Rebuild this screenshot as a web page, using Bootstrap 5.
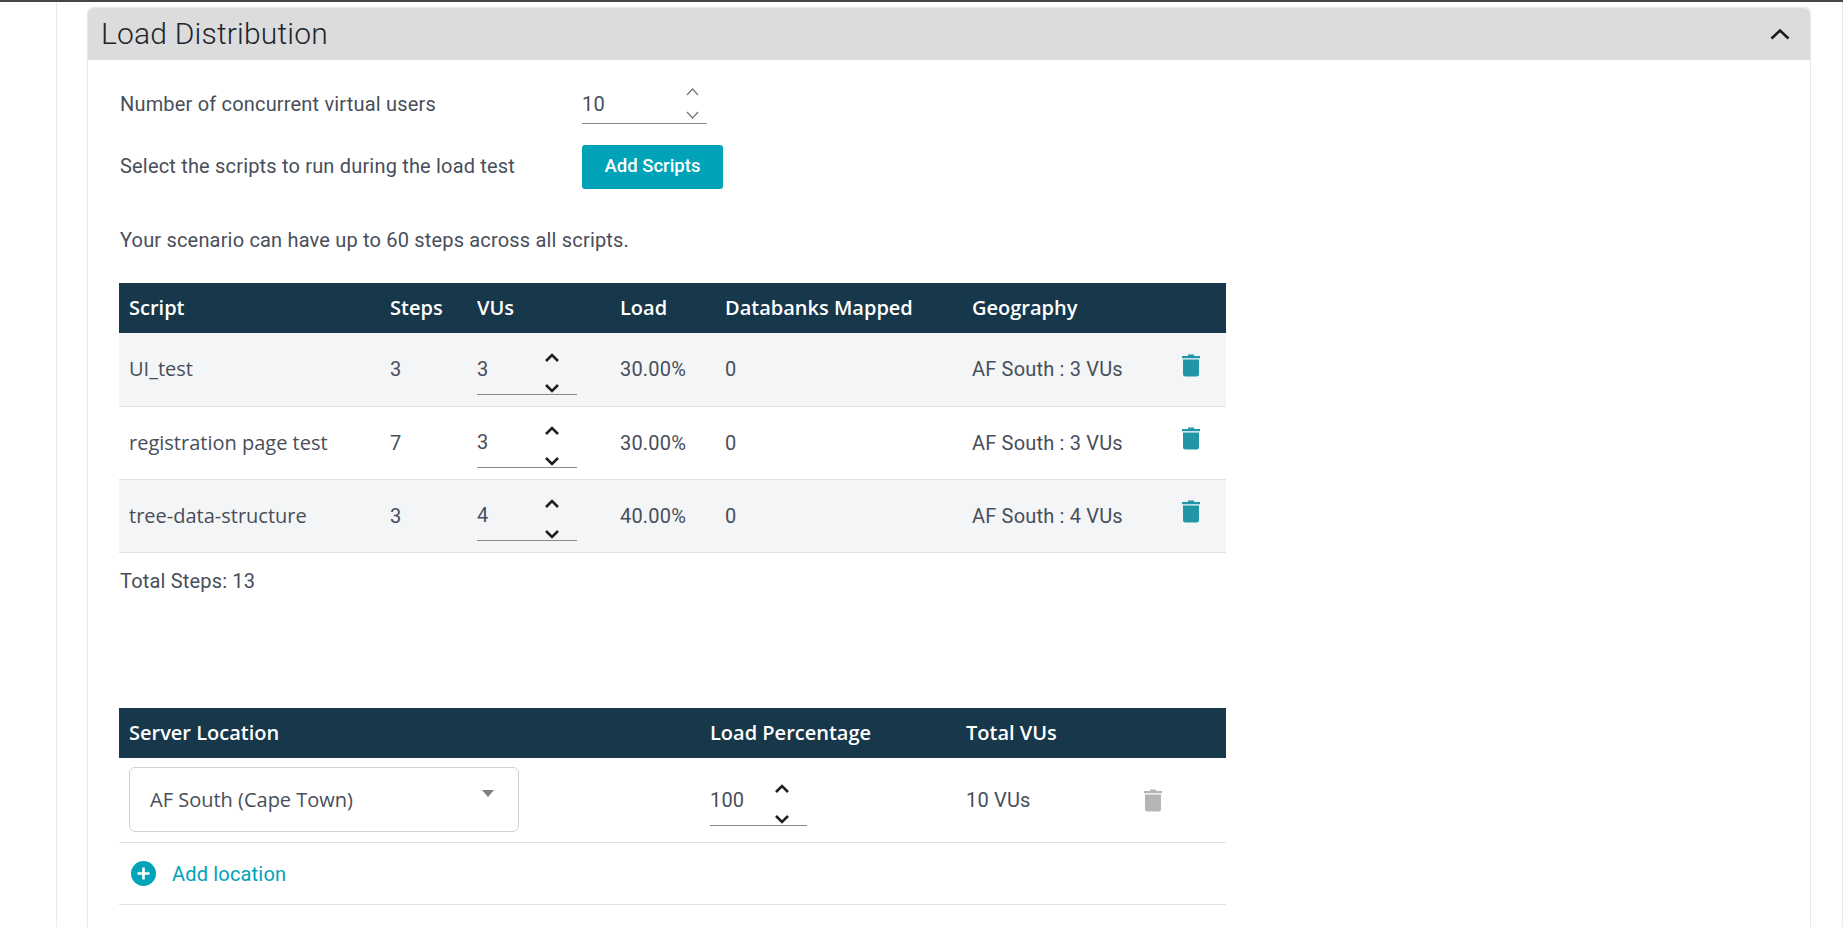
<!DOCTYPE html>
<html lang="en">

<head>
    <meta charset="UTF-8" />
    <meta name="viewport" content="width=device-width, initial-scale=1.0" />
    <title>Load Distribution</title>
    <link href="https://cdn.jsdelivr.net/npm/bootstrap@5.3.0/dist/css/bootstrap.min.css" rel="stylesheet" />
    <style>
        html, body { height: 100%; overflow: hidden; background: #fff; }
        body { font-family: Roboto, sans-serif; font-size: 20px; color: #484e5a; letter-spacing: .18px; }
        .top-line { height: 2px; background: #45464a; }
        .page-shell { margin-left: 56px; padding: 5px 31px 0 30px; height: calc(100% - 2px); border-left: 1px solid #eaeaea; border-right: 1px solid #eaeaea; }
        .panel-box { border: 1px solid #e8e8e8; border-bottom: 0; border-radius: 6px 6px 0 0; height: 1000px; }
        .panel-head { height: 52px; background: #dcdcdc; padding: 0 20px 0 13px; border-radius: 6px 6px 0 0; color: #20262e; }
        .panel-title { font-size: 30px; font-weight: 300; margin: 0; letter-spacing: .2px; }
        .panel-body-area { padding: 24px 0 0 31px; }
        .field-label { width: 462px; margin: 0 0 0 1px; }
        .field-label-up { margin-bottom: 2px; }
        .stepper { border-bottom: 1px solid #8a8a8a; }
        .stepper-top { width: 125px; height: 40px; padding-right: 8px; }
        .stepper-cell { width: 100px; height: 43px; padding: 1px 17px 1px 0; margin-top: 8px; }
        .stepper-loc { width: 97px; margin-top: 9px; }
        .step-val { margin-bottom: 8px; }
        .step-arrows { height: 100%; }
        .btn-add { background: #00a3b8; color: #fff; border: 0; border-radius: 3px; width: 141px; height: 44px; font-size: 18.5px; font-weight: 500; padding: 0; letter-spacing: 0; }
        .btn-add:hover { background: #0093a6; color: #fff; }
        .row-gap { margin-top: 21px; }
        .steps-note { margin: 38px 0 30px 1px; line-height: 26px; }
        .data-table { width: 1107px; table-layout: fixed; margin: 0; }
        .data-table th { background: #17374a; color: #fff; font-family: "Open Sans", sans-serif; font-size: 20px; font-weight: 600; letter-spacing: 0; height: 50px; padding: 0 0 0 10px; border: 0; vertical-align: middle; }
        .data-table td { height: 73px; padding: 0 0 0 10px; vertical-align: middle; border-bottom: 1px solid #dfe1e3; color: #484e5a; }
        .data-table tr.row-alt td { background: #f4f5f7; }
        .script-name { font-family: "Open Sans", sans-serif; letter-spacing: 0; }
        .total-note { margin: 15px 0 0 1px; line-height: 26px; height: 140px; }
        .loc-table td { height: 85px; }
        .loc-table tr.add-row td { height: 62px; }
        .loc-select { width: 390px; height: 65px; border: 1px solid #cfd2d6; border-radius: 6px; padding: 0 24px 0 20px; font-family: "Open Sans", sans-serif; letter-spacing: 0; color: #484e5a; }
        .select-caret { width: 0; height: 0; border-left: 6px solid transparent; border-right: 6px solid transparent; border-top: 7px solid #7f7f7f; margin-top: -13px; }
        .add-link { color: #00a3b8; text-decoration: none; }
        .add-icon { margin-left: 2px; }
        .trash-on { display: block; margin: -9px 0 0 16px; }
        .trash-off { display: block; margin-left: 18px; }
    </style>
</head>

<body>
    <div class="top-line"></div>
    <div class="page-shell">
        <div class="panel-box">
            <div class="panel-head d-flex align-items-center justify-content-between">
                <h2 class="panel-title">Load Distribution</h2>
                <svg width="20" height="12" viewBox="0 0 20 12" fill="none" stroke="#1c1c1c" stroke-width="2.6"><path d="M1.5 10.5 10 2.5l8.5 8" /></svg>
            </div>
            <div class="panel-body-area">
                <div class="d-flex align-items-center">
                    <p class="field-label">Number of concurrent virtual users</p>
                    <div class="stepper stepper-top d-flex align-items-center justify-content-between">
                        <span>10</span>
                        <div class="step-arrows d-flex flex-column justify-content-between align-items-center py-1">
                            <svg width="13" height="8" viewBox="0 0 13 8" fill="none" stroke="#777" stroke-width="1.3"><path d="M1 7l5.5-6L12 7" /></svg>
                            <svg width="13" height="8" viewBox="0 0 13 8" fill="none" stroke="#777" stroke-width="1.3"><path d="M1 1l5.5 6L12 1" /></svg>
                        </div>
                    </div>
                </div>
                <div class="d-flex align-items-center row-gap">
                    <p class="field-label field-label-up">Select the scripts to run during the load test</p>
                    <button class="btn btn-add">Add Scripts</button>
                </div>
                <p class="steps-note">Your scenario can have up to 60 steps across all scripts.</p>

                <table class="table data-table">
                    <colgroup>
                        <col style="width: 261px" />
                        <col style="width: 87px" />
                        <col style="width: 143px" />
                        <col style="width: 105px" />
                        <col style="width: 247px" />
                        <col style="width: 194px" />
                        <col />
                    </colgroup>
                    <thead>
                        <tr>
                            <th>Script</th>
                            <th>Steps</th>
                            <th>VUs</th>
                            <th>Load</th>
                            <th>Databanks Mapped</th>
                            <th>Geography</th>
                            <th></th>
                        </tr>
                    </thead>
                    <tbody id="scriptRows"></tbody>
                </table>
                <p class="total-note">Total Steps: 13</p>

                <table class="table data-table loc-table">
                    <colgroup>
                        <col style="width: 581px" />
                        <col style="width: 256px" />
                        <col style="width: 160px" />
                        <col />
                    </colgroup>
                    <thead>
                        <tr>
                            <th>Server Location</th>
                            <th>Load Percentage</th>
                            <th>Total VUs</th>
                            <th></th>
                        </tr>
                    </thead>
                    <tbody>
                        <tr>
                            <td>
                                <div class="loc-select d-flex align-items-center justify-content-between">
                                    <span>AF South (Cape Town)</span>
                                    <span class="select-caret"></span>
                                </div>
                            </td>
                            <td>
                                <div class="stepper stepper-cell stepper-loc d-flex align-items-center justify-content-between">
                                    <span class="step-val">100</span>
                                    <div class="step-arrows d-flex flex-column justify-content-between align-items-center">
                                        <svg width="16" height="10" viewBox="0 0 16 10" fill="none" stroke="#1f1f1f" stroke-width="2.6"><path d="M2 8l6-6 6 6" /></svg>
                                        <svg width="16" height="10" viewBox="0 0 16 10" fill="none" stroke="#1f1f1f" stroke-width="2.6"><path d="M2 2l6 6 6-6" /></svg>
                                    </div>
                                </div>
                            </td>
                            <td>10 VUs</td>
                            <td>
                                <svg class="trash-off" width="18" height="24" viewBox="0 0 18 24" fill="#b5b5b5"><path d="M6 1.5h6V3h6v2.2H0V3h6zM1 6.5h16V21a2.5 2.5 0 0 1-2.5 2.5h-11A2.5 2.5 0 0 1 1 21z" /></svg>
                            </td>
                        </tr>
                        <tr class="add-row">
                            <td colspan="4">
                                <div class="d-flex align-items-center gap-3">
                                    <svg class="add-icon" width="25" height="25" viewBox="0 0 25 25"><circle cx="12.5" cy="12.5" r="12.5" fill="#00a3b8" /><path d="M12.5 6.5v12M6.5 12.5h12" stroke="#fff" stroke-width="2.6" /></svg>
                                    <a href="#" class="add-link">Add location</a>
                                </div>
                            </td>
                        </tr>
                    </tbody>
                </table>
            </div>
        </div>
    </div>

    <script src="https://cdn.jsdelivr.net/npm/bootstrap@5.3.0/dist/js/bootstrap.bundle.min.js"></script>
    <script>
        const scripts = [
            { name: "UI_test", steps: 3, vus: 3, load: "30.00%", alt: true },
            { name: "registration page test", steps: 7, vus: 3, load: "30.00%", alt: false },
            { name: "tree-data-structure", steps: 3, vus: 4, load: "40.00%", alt: true },
        ];

        document.getElementById("scriptRows").innerHTML = scripts.map((s) => `
            <tr class="${s.alt ? "row-alt" : ""}">
                <td class="script-name">${s.name}</td>
                <td>${s.steps}</td>
                <td>
                    <div class="stepper stepper-cell d-flex align-items-center justify-content-between">
                        <span class="step-val">${s.vus}</span>
                        <div class="step-arrows d-flex flex-column justify-content-between align-items-center">
                            <svg width="16" height="10" viewBox="0 0 16 10" fill="none" stroke="#1f1f1f" stroke-width="2.6"><path d="M2 8l6-6 6 6" /></svg>
                            <svg width="16" height="10" viewBox="0 0 16 10" fill="none" stroke="#1f1f1f" stroke-width="2.6"><path d="M2 2l6 6 6-6" /></svg>
                        </div>
                    </div>
                </td>
                <td>${s.load}</td>
                <td>0</td>
                <td>AF South : ${s.vus} VUs</td>
                <td>
                    <svg class="trash-on" width="18" height="24" viewBox="0 0 18 24" fill="#2196a6"><path d="M6 1.5h6V3h6v2.2H0V3h6zM1 6.5h16V21a2.5 2.5 0 0 1-2.5 2.5h-11A2.5 2.5 0 0 1 1 21z" /></svg>
                </td>
            </tr>`).join("");
    </script>
</body>

</html>
